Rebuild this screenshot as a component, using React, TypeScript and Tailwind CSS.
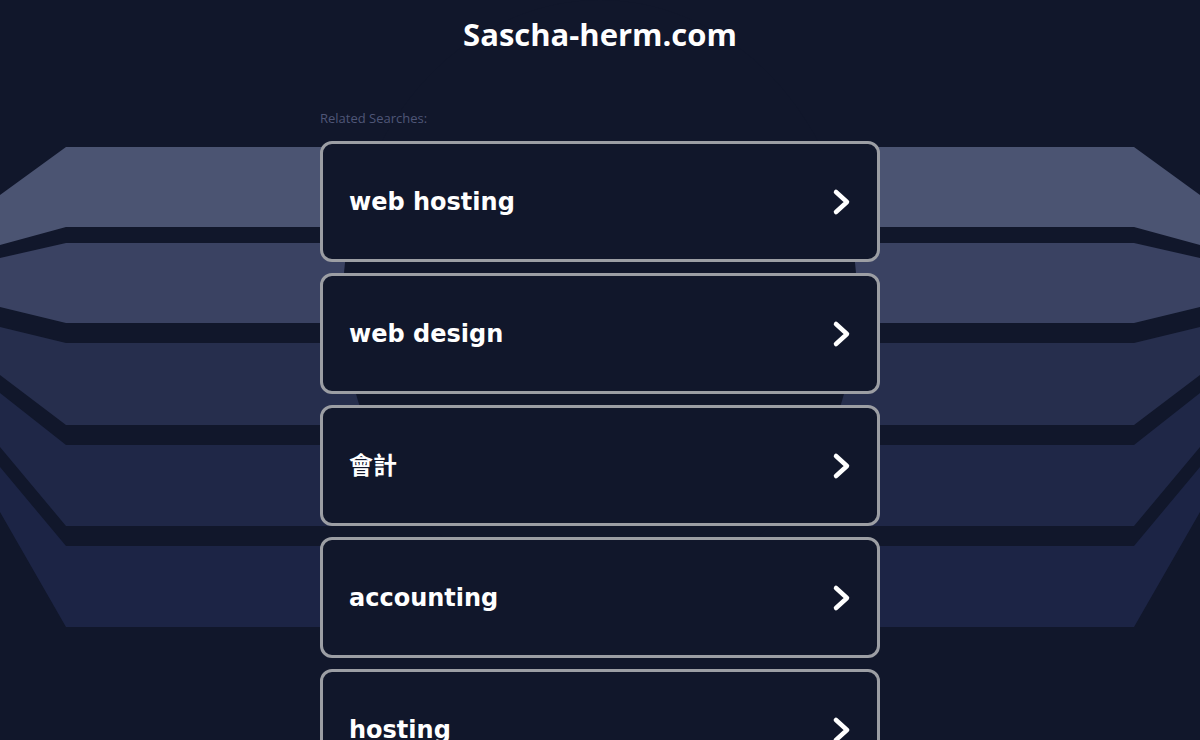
const searches = ["web hosting", "web design", "會計", "accounting", "hosting"];

// band outlines, left half; the right half is mirrored
const bands = [
  { fill: "#4b5472", pts: [[0, 195], [66, 147], [66, 227], [0, 245]] },
  { fill: "#3a4262", pts: [[0, 258], [66, 243], [66, 323], [0, 307]] },
  { fill: "#262e4d", pts: [[0, 327], [66, 343], [66, 425], [0, 375]] },
  { fill: "#1f2747", pts: [[0, 393], [66, 445], [66, 526], [0, 447]] },
  { fill: "#1c2445", pts: [[0, 467], [66, 546], [66, 627], [0, 512]] },
];

function bandPoints(pts: number[][]) {
  const [a, b, c, d] = pts;
  const m = (p: number[]) => `${1200 - p[0]},${p[1]}`;
  return [
    `${a[0]},${a[1]}`,
    `${b[0]},${b[1]}`,
    m(b),
    m(a),
    m(d),
    m(c),
    `${c[0]},${c[1]}`,
    `${d[0]},${d[1]}`,
  ].join(" ");
}

function Backdrop() {
  return (
    <svg
      className="absolute inset-0"
      width="1200"
      height="740"
      viewBox="0 0 1200 740"
      aria-hidden="true"
    >
      {bands.map((b, i) => (
        <polygon key={i} points={bandPoints(b.pts)} fill={b.fill} />
      ))}
      <ellipse cx="600" cy="300" rx="257" ry="300" fill="#11172b" />
    </svg>
  );
}

function Chevron() {
  return (
    <svg width="20" height="28" viewBox="0 0 20 28" fill="none">
      <path
        d="M4 4 L15 14 L4 24"
        stroke="white"
        strokeWidth="4.5"
        strokeLinecap="round"
        strokeLinejoin="round"
      />
    </svg>
  );
}

export default function App() {
  return (
    <div className="relative h-[740px] w-full overflow-hidden bg-[#11172b]">
      <Backdrop />
      <div className="relative flex flex-col items-center pt-[14px]">
        <h1 className="text-[31px] leading-[40px] font-bold text-white [font-family:'Open_Sans',sans-serif]">
          Sascha-herm.com
        </h1>
        <div className="mt-[56px] w-[560px]">
          <p className="text-[13px] leading-[16px] text-[#4f5677] [font-family:'Open_Sans',sans-serif]">
            Related Searches:
          </p>
          <ul className="mt-[15px] flex flex-col gap-[11px]">
            {searches.map((s) => (
              <li
                key={s}
                className="flex h-[121px] items-center justify-between rounded-[12px] border-[3px] border-[#9c9ea4] bg-[#11172b] pl-[26px] pr-[25px]"
              >
                <span className="text-[24px] font-bold text-white [font-family:'DejaVu_Sans','Noto_Sans_CJK_TC',sans-serif]">
                  {s}
                </span>
                <Chevron />
              </li>
            ))}
          </ul>
        </div>
      </div>
    </div>
  );
}
